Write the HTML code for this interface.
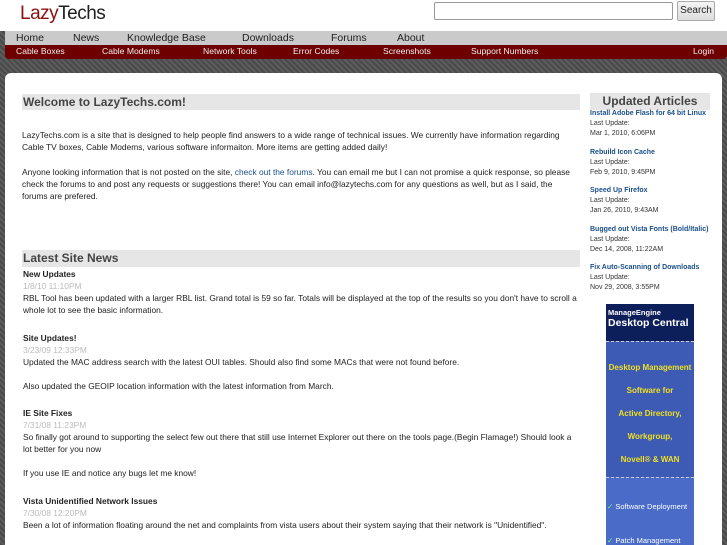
<!DOCTYPE html>
<html style="width:727px;height:545px;overflow:hidden"><head><style>
*{margin:0;padding:0;box-sizing:border-box}
body{width:727px;height:545px;overflow:hidden;font-family:"Liberation Sans",sans-serif;background:repeating-linear-gradient(45deg,#4a4a4a 0 2px,#5c5c5c 2px 4px);position:relative}
.hdr{position:absolute;left:0;top:0;width:727px;height:31px;background:#fff}
.logo{position:absolute;left:20px;top:3px;font-size:19px;color:#222;letter-spacing:-0.5px}
.sbox{position:absolute;left:434px;top:2px;width:239px;height:18px;border:1px solid #999;border-radius:2px;background:#fff}
.sbtn{position:absolute;left:677px;top:1px;width:38px;height:20px;border:1px solid #aaa;border-radius:2px;background:linear-gradient(#f4f4f4,#ddd);font-size:10px;color:#222;text-align:center;line-height:18px}
.nav1{position:absolute;left:5px;top:31px;width:722px;height:14px;background:#cacaca;font-size:10.5px;color:#222;line-height:14px}
.nav1 span,.nav2 span{position:absolute;top:0}
.nav2{position:absolute;left:5px;top:45px;width:722px;height:14px;background:#6e0000;border-radius:0 0 4px 4px;font-size:8.6px;color:#eee;line-height:13px}
.main{position:absolute;left:5px;top:73px;width:717px;height:490px;background:#fff;border-radius:6px}
.h{position:absolute;background:#e6e6e6;color:#444;font-weight:bold}
p{position:absolute;font-size:8.4px;color:#222;line-height:11.9px}
.d{color:#bbb}
a{color:#1a4f8a;text-decoration:none}
.side{position:absolute;left:590px;font-size:7px;line-height:10px;color:#333}
.side b{color:#1a4f8a}
</style></head><body>
<div class="hdr"><div class="logo"><span style="color:#8a1010">Lazy</span>Techs</div>
<div class="sbox"></div><div class="sbtn">Search</div></div>
<div class="nav1"><span style="left:11px">Home</span><span style="left:68px">News</span><span style="left:122px">Knowledge Base</span><span style="left:237px">Downloads</span><span style="left:326px">Forums</span><span style="left:392px">About</span></div>
<div class="nav2"><span style="left:11px">Cable Boxes</span><span style="left:97px">Cable Modems</span><span style="left:198px">Network Tools</span><span style="left:288px">Error Codes</span><span style="left:378px">Screenshots</span><span style="left:466px">Support Numbers</span><span style="left:688px">Login</span></div>
<div class="main"></div>
<div class="h" style="left:22px;top:94px;width:558px;height:16px;font-size:12px;line-height:16px;padding-left:1px">Welcome to LazyTechs.com!</div>
<p style="left:22px;top:130px;width:558px">LazyTechs.com is a site that is designed to help people find answers to a wide range of technical issues. We currently have information regarding Cable TV boxes, Cable Modems, various software informaiton. More items are getting added daily!</p>
<p style="left:22px;top:167px;width:558px">Anyone looking information that is not posted on the site, <a>check out the forums</a>. You can email me but I can not promise a quick response, so please check the forums to and post any requests or suggestions there! You can email info@lazytechs.com for any questions as well, but as I said, the forums are prefered.</p>
<div class="h" style="left:22px;top:250px;width:558px;height:17px;font-size:12px;line-height:17px;padding-left:1px">Latest Site News</div>
<p style="left:23px;top:269px;width:558px"><b>New Updates</b><br><span class="d">1/8/10 11:10PM</span><br>RBL Tool has been updated with a larger RBL list. Grand total is 59 so far. Totals will be displayed at the top of the results so you don't have to scroll a whole lot to see the basic information.</p>
<p style="left:23px;top:333px;width:558px"><b>Site Updates!</b><br><span class="d">3/23/09 12:33PM</span><br>Updated the MAC address search with the latest OUI tables. Should also find some MACs that were not found before.<br><br>Also updated the GEOIP location information with the latest information from March.</p>
<p style="left:23px;top:408px;width:558px"><b>IE Site Fixes</b><br><span class="d">7/31/08 11:23PM</span><br>So finally got around to supporting the select few out there that still use Internet Explorer out there on the tools page.(Begin Flamage!) Should look a lot better for you now<br><br>If you use IE and notice any bugs let me know!</p>
<p style="left:23px;top:496px;width:558px"><b>Vista Unidentified Network Issues</b><br><span class="d">7/30/08 12:20PM</span><br>Been a lot of information floating around the net and complaints from vista users about their system saying that their network is "Unidentified".</p>
<div class="h" style="left:590px;top:93px;width:120px;height:17px;font-size:12px;line-height:17px;text-align:center">Updated Articles</div>
<div class="side" style="top:109px"><b>Install Adobe Flash for 64 bit Linux</b><br>Last Update:<br>Mar 1, 2010, 6:06PM</div>
<div class="side" style="top:148px"><b>Rebuild Icon Cache</b><br>Last Update:<br>Feb 9, 2010, 9:45PM</div>
<div class="side" style="top:186px"><b>Speed Up Firefox</b><br>Last Update:<br>Jan 26, 2010, 9:43AM</div>
<div class="side" style="top:225px"><b>Bugged out Vista Fonts (Bold/Italic)</b><br>Last Update:<br>Dec 14, 2008, 11:22AM</div>
<div class="side" style="top:263px"><b>Fix Auto-Scanning of Downloads</b><br>Last Update:<br>Nov 29, 2008, 3:55PM</div>
<div style="position:absolute;left:606px;top:304px;width:88px;height:241px;background:#3d5ab5;font-size:8px;font-weight:bold;color:#f0e020;text-align:center">
<div style="background:#0d1f5a;height:37px;color:#fff;text-align:left;padding:4px 0 0 2px;font-size:7.5px">ManageEngine<br><span style="font-size:10.5px">Desktop Central</span></div>
<div style="border-top:1px dashed #ccc;padding-top:14px;line-height:23px">Desktop Management<br>Software for<br>Active Directory,<br>Workgroup,<br>Novell® &amp; WAN</div>
<div style="border-top:1px dashed #ccc;margin-top:6px;background:#4a6cc8;height:80px;color:#fff;font-weight:normal;font-size:7.5px;text-align:left;padding:12px 0 0 1px;line-height:34px"><span style="color:#6f6">✓</span> Software Deployment<br><span style="color:#6f6">✓</span> Patch Management</div>
</div>
</body></html>
